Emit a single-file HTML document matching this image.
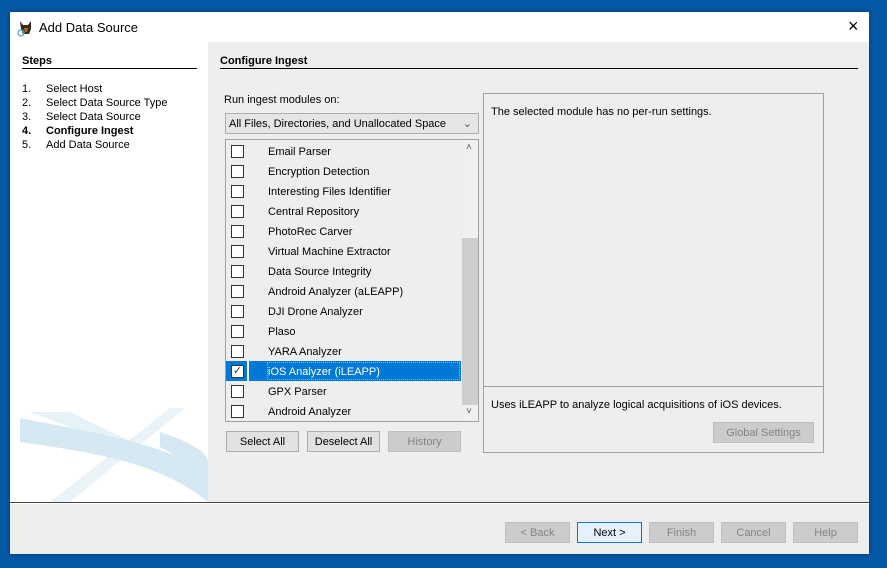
<!DOCTYPE html><html><head><style>
*{margin:0;padding:0;box-sizing:border-box}
body{width:887px;height:568px;background:#0558a5;font-family:"Liberation Sans",sans-serif;font-size:11px;color:#000;position:relative;overflow:hidden}
.a{position:absolute}
.win{left:10px;top:12px;width:859px;height:542px;background:#eeeeee;box-shadow:0 0 4px rgba(0,0,0,.4)}
.btn{position:absolute;height:21px;border:1px solid #adadad;background:#e1e1e1;text-align:center;line-height:20px;font-size:11px}
.dis{background:#cccccc;border-color:#bfbfbf;color:#838383}
.row{position:absolute;left:0;width:235px;height:20px;line-height:20px}
.cb{position:absolute;left:5px;top:4px;width:13px;height:13px;border:1px solid #333;background:#fff}
.row span{position:absolute;left:42px;top:1px}
</style></head><body>
<div class="a win">
 <div class="a" style="left:0;top:0;width:859px;height:30px;background:#fff"></div>
 <svg class="a" style="left:7px;top:7px" width="18" height="18" viewBox="0 0 18 18"><path d="M3 2 L6 6 L11 6 L14 2 L14 10 L12 15 L6 15 L4 10Z" fill="#3a2a20"/><path d="M7 9 L11 9 L10 13 L8 13Z" fill="#b06a30"/><circle cx="4" cy="14" r="3" fill="none" stroke="#5ab" stroke-width="1.3"/></svg>
 <div class="a" style="left:29px;top:8px;font-size:13px">Add Data Source</div>
 <div class="a" style="left:838px;top:4px;font-size:18px;font-weight:300">×</div>
 <div class="a" style="left:0;top:30px;width:198px;height:460px;background:#fff;overflow:hidden">
  <svg class="a" style="left:0;top:360px" width="198" height="100" viewBox="0 0 198 100"><g fill="#bcdcea" opacity=".6"><path d="M10 16 C80 30 150 40 198 70 L198 100 C150 60 80 50 10 40Z"/><path d="M20 10 L60 10 C120 40 170 60 198 80 L190 90 C150 60 100 40 20 10Z" opacity=".6"/><path d="M160 6 L175 6 L60 100 L40 100Z" opacity=".5"/><path d="M150 30 C180 40 198 50 198 60 L198 90 C190 70 170 55 150 45Z"/></g></svg>
 </div>
 <div class="a" style="left:12px;top:43px;font-weight:bold">Steps</div>
 <div class="a" style="left:12px;top:56px;width:175px;height:1px;background:#000"></div>
 <div class="a" style="left:12px;top:70px;line-height:14px">1.<br>2.<br>3.<br><b>4.</b><br>5.</div>
 <div class="a" style="left:36px;top:70px;line-height:14px">Select Host<br>Select Data Source Type<br>Select Data Source<br><b>Configure Ingest</b><br>Add Data Source</div>
 <div class="a" style="left:210px;top:43px;font-weight:bold">Configure Ingest</div>
 <div class="a" style="left:210px;top:56px;width:638px;height:1px;background:#000"></div>
 <div class="a" style="left:214px;top:82px">Run ingest modules on:</div>
 <div class="a" style="left:215px;top:101px;width:254px;height:21px;border:1px solid #adadad;background:#e5e5e5;line-height:20px;padding-left:3px">All Files, Directories, and Unallocated Space<span class="a" style="right:6px;top:0;color:#555">&#8964;</span></div>
 <div class="a" style="left:215px;top:127px;width:254px;height:283px;border:1px solid #a0a0a0;background:#eee;overflow:hidden">
  <div class="a" style="left:0;top:1px">
   <div class="row" style="top:0"><div class="cb"></div><span>Email Parser</span></div>
   <div class="row" style="top:20px"><div class="cb"></div><span>Encryption Detection</span></div>
   <div class="row" style="top:40px"><div class="cb"></div><span>Interesting Files Identifier</span></div>
   <div class="row" style="top:60px"><div class="cb"></div><span>Central Repository</span></div>
   <div class="row" style="top:80px"><div class="cb"></div><span>PhotoRec Carver</span></div>
   <div class="row" style="top:100px"><div class="cb"></div><span>Virtual Machine Extractor</span></div>
   <div class="row" style="top:120px"><div class="cb"></div><span>Data Source Integrity</span></div>
   <div class="row" style="top:140px"><div class="cb"></div><span>Android Analyzer (aLEAPP)</span></div>
   <div class="row" style="top:160px"><div class="cb"></div><span>DJI Drone Analyzer</span></div>
   <div class="row" style="top:180px"><div class="cb"></div><span>Plaso</span></div>
   <div class="row" style="top:200px"><div class="cb"></div><span>YARA Analyzer</span></div>
   <div class="row" style="top:220px;background:#0078d7;color:#fff"><div class="a" style="left:21px;top:0;width:2px;height:20px;background:#fff"></div><div class="cb" style="font-size:11px;line-height:10px;color:#333;text-align:center">✓</div><span style="left:41px;border:1px dotted #f8a;line-height:16px;top:1px;padding:1px 2px 0 0;width:193px;height:18px">iOS Analyzer (iLEAPP)</span></div>
   <div class="row" style="top:240px"><div class="cb"></div><span>GPX Parser</span></div>
   <div class="row" style="top:260px"><div class="cb"></div><span>Android Analyzer</span></div>
  </div>
  <div class="a" style="left:236px;top:0;width:16px;height:281px;background:#f0f0f0"></div>
  <div class="a" style="left:236px;top:98px;width:16px;height:167px;background:#cdcdcd"></div>
  <div class="a" style="left:240px;top:2px;font-size:10px;color:#555">&#708;</div>
  <div class="a" style="left:240px;top:266px;font-size:10px;color:#555">&#709;</div>
 </div>
 <div class="btn" style="left:216px;top:419px;width:73px">Select All</div>
 <div class="btn" style="left:297px;top:419px;width:73px">Deselect All</div>
 <div class="btn dis" style="left:378px;top:419px;width:73px">History</div>
 <div class="a" style="left:473px;top:81px;width:341px;height:360px;border:1px solid #a0a0a0"></div>
 <div class="a" style="left:474px;top:374px;width:339px;height:1px;background:#a0a0a0"></div>
 <div class="a" style="left:481px;top:94px">The selected module has no per-run settings.</div>
 <div class="a" style="left:481px;top:387px">Uses iLEAPP to analyze logical acquisitions of iOS devices.</div>
 <div class="btn dis" style="left:703px;top:410px;width:101px">Global Settings</div>
 <div class="a" style="left:0;top:490px;width:859px;height:1px;background:#444"></div>
 <div class="a" style="left:0;top:491px;width:859px;height:1px;background:#fff"></div>
 <div class="btn dis" style="left:495px;top:510px;width:65px">&lt; Back</div>
 <div class="btn" style="left:567px;top:510px;width:65px;border:1px solid #0078d7;background:#e5f1fb">Next &gt;</div>
 <div class="btn dis" style="left:639px;top:510px;width:65px">Finish</div>
 <div class="btn dis" style="left:711px;top:510px;width:65px">Cancel</div>
 <div class="btn dis" style="left:783px;top:510px;width:65px">Help</div>
</div>
</body></html>
